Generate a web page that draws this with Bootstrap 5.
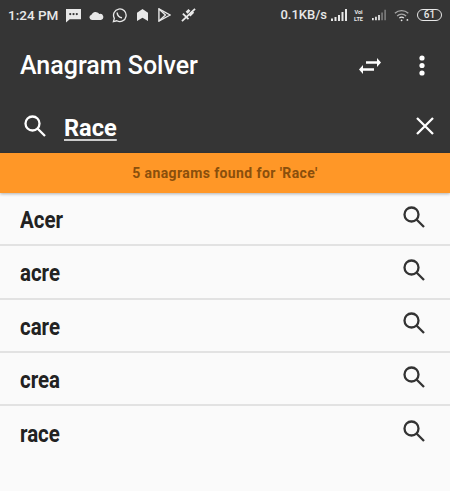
<!DOCTYPE html>
<html lang="en">
<head>
  <meta charset="UTF-8">
  <meta name="viewport" content="width=device-width, initial-scale=1.0">
  <title>Anagram Solver</title>
  <link href="https://cdn.jsdelivr.net/npm/bootstrap@5.3.0/dist/css/bootstrap.min.css" rel="stylesheet">
  <style>
    html, body { height: 100%; overflow: hidden; }
    body { font-family: Roboto, "Liberation Sans", sans-serif; background-color: #fafafa; }
    .app-dark { background-color: #353535; color: #fff; }
    .status-row { height: 30px; padding: 0 8px; font-size: 13.5px; font-weight: 500; color: #e8e8e8; }
    .status-row svg { display: block; flex: none; }
    .status-left { gap: 8px; }
    .gap-wide { margin-left: 2px; }
    .status-right { gap: 4px; }
    .net-speed { font-size: 13px; }
    .push-2 { margin-left: 2px; }
    .push-4 { margin-left: 4px; }
    .batt { width: 25px; height: 12px; border: 1.5px solid #e8e8e8; border-radius: 6px; font-size: 10px; line-height: 9px; text-align: center; }
    .tool-row { height: 71px; padding: 0 24px 0 20px; }
    .app-name { font-size: 25px; font-weight: 500; letter-spacing: 0; line-height: 1; margin: 0; }
    .tool-actions { gap: 37px; }
    .find-row { height: 52px; padding: 0 15px 0 24px; }
    .find-icon { margin-bottom: 3px; }
    .find-word { font-size: 23.6px; font-weight: 700; line-height: 1; margin-left: 18px; margin-top: 3px; text-decoration: underline; text-decoration-color: #ccc; text-decoration-thickness: 1.5px; text-underline-offset: 3px; }
    .found-bar { height: 40px; background-color: #ff9727; color: #8a4f0c; font-size: 14px; font-weight: 700; letter-spacing: .4px; box-shadow: 0 1px 3px rgba(0, 0, 0, .3); position: relative; }
    .word-list .list-group-item { height: 53.33px; padding: 0 25px 0 20px; background: transparent; border-color: #e2e2e2; border-width: 0 0 2px; }
    .word-list .list-group-item:last-child { border-bottom: 0; }
    .word-text { font-size: 23px; font-weight: 700; color: #222; margin-top: 5px; display: inline-block; transform: scaleX(.89); transform-origin: left center; }
    .word-list svg { margin-bottom: 4px; }
  </style>
</head>
<body>
  <div class="app-dark">
    <div class="status-row d-flex align-items-center justify-content-between">
      <div class="status-left d-flex align-items-center">
        <span>1:24 PM</span>
        <svg width="15" height="15" viewBox="0 0 16 16"><path fill="#e8e8e8" d="M0 1h16v11H4l-4 3.500z"/><circle cx="4.500" cy="6.500" r="1.200" fill="#353535"/><circle cx="8" cy="6.500" r="1.200" fill="#353535"/><circle cx="11.500" cy="6.500" r="1.200" fill="#353535"/></svg>
        <svg width="15" height="9" viewBox="0 0 16 10"><path fill="#e8e8e8" d="M3 10a3 3 0 0 1-.6-5.900A5 5 0 0 1 11 3.200 3.400 3.400 0 0 1 13 10z"/></svg>
        <svg width="15" height="15" viewBox="0 0 16 16" fill="none" stroke="#e8e8e8" stroke-width="1.400"><path d="M1.500 14.500l1-3.500a6.700 6.700 0 1 1 2.600 2.600z"/><path stroke-width="1.600" d="M5.500 4.800c0 3 2.500 5.500 5.200 5.700"/></svg>
        <svg class="gap-wide" width="11" height="12" viewBox="0 0 12 13"><path fill="#e8e8e8" d="M0 13V4l6-4 6 4v9L6 9.500z"/></svg>
        <svg class="gap-wide" width="13" height="14" viewBox="0 0 14 15" fill="none" stroke="#e8e8e8" stroke-width="1.500"><path d="M1 1l12 6.500L1 14z"/><path d="M1 1l7 6.500L1 14"/></svg>
        <svg class="gap-wide" width="15" height="14" viewBox="0 0 16 15" fill="none" stroke="#e8e8e8" stroke-width="2"><path d="M1 14L15 1"/><path stroke-width="3" d="M6 5l3-3M9 8l4-4"/><path d="M2 6l6 6"/></svg>
      </div>
      <div class="status-right d-flex align-items-center">
        <span class="net-speed">0.1KB/s</span>
        <svg width="16" height="12" viewBox="0 0 16 12"><path fill="#e8e8e8" d="M0 9.500h2V12H0zM3.500 8h2v4h-2zM7 6h2v6H7zM10.500 3h2v9h-2zM14 0h2v12h-2z"/></svg>
        <svg width="15" height="14" viewBox="0 0 16 14"><text x="8" y="6" text-anchor="middle" font-size="6" font-weight="700" fill="#e8e8e8">Voi</text><text x="8" y="13" text-anchor="middle" font-size="6" font-weight="700" fill="#e8e8e8">LTE</text></svg>
        <svg class="push-2" width="14" height="12" viewBox="0 0 16 12"><path fill="#e8e8e8" d="M0 9.500h2V12H0zM3.500 8h2v4h-2zM7 6h2v6H7z"/><path fill="#777" d="M10.500 3h2v9h-2zM14 0h2v12h-2z"/></svg>
        <svg class="push-4" width="17" height="14" viewBox="0 0 19 14" fill="none" stroke="#a8a8a8" stroke-width="1.500"><path d="M1 5a11 11 0 0 1 15 0"/><path d="M3.500 8a7.500 7.500 0 0 1 10 0"/><path stroke="#e8e8e8" d="M6 10.500a3.500 3.500 0 0 1 5 0"/><circle cx="8.500" cy="13" r="1" fill="#e8e8e8" stroke="none"/><circle cx="15" cy="12.500" r="1" fill="#e8e8e8" stroke="none"/></svg>
        <div class="batt push-2">61</div>
      </div>
    </div>
    <div class="tool-row d-flex align-items-center justify-content-between">
      <h1 class="app-name">Anagram Solver</h1>
      <div class="tool-actions d-flex align-items-center">
        <svg width="22" height="16" viewBox="0 0 22 16" fill="#fff"><path d="M7 3.300h11V0l4 4.500-4 4.500V5.700H7z"/><path d="M15 10.300H4V7l-4 4.500L4 16v-3.300h11z"/></svg>
        <svg width="8" height="21" viewBox="0 0 8 21" fill="#fff"><circle cx="4" cy="3" r="2.600"/><circle cx="4" cy="10.500" r="2.600"/><circle cx="4" cy="18" r="2.600"/></svg>
      </div>
    </div>
    <div class="find-row d-flex align-items-center">
      <svg class="find-icon" width="22" height="22" viewBox="0 0 22 22" fill="none" stroke="#fff" stroke-width="2.300"><circle cx="8.500" cy="8.500" r="7"/><path d="M13.500 13.500l7.500 7.500"/></svg>
      <span class="find-word">Race</span>
      <svg class="find-icon ms-auto" width="20" height="20" viewBox="0 0 20 20" fill="none" stroke="#fff" stroke-width="2.300"><path d="M2 2l16 16M18 2L2 18"/></svg>
    </div>
  </div>
  <div class="found-bar d-flex align-items-center justify-content-center">5 anagrams found for 'Race'</div>
  <div class="list-group list-group-flush word-list">
    <div class="list-group-item d-flex align-items-center justify-content-between"><span class="word-text">Acer</span><svg width="22" height="22" viewBox="0 0 22 22" fill="none" stroke="#333" stroke-width="2.300"><circle cx="8.500" cy="8.500" r="7"/><path d="M13.500 13.500l7.500 7.500"/></svg></div>
    <div class="list-group-item d-flex align-items-center justify-content-between"><span class="word-text">acre</span><svg width="22" height="22" viewBox="0 0 22 22" fill="none" stroke="#333" stroke-width="2.300"><circle cx="8.500" cy="8.500" r="7"/><path d="M13.500 13.500l7.500 7.500"/></svg></div>
    <div class="list-group-item d-flex align-items-center justify-content-between"><span class="word-text">care</span><svg width="22" height="22" viewBox="0 0 22 22" fill="none" stroke="#333" stroke-width="2.300"><circle cx="8.500" cy="8.500" r="7"/><path d="M13.500 13.500l7.500 7.500"/></svg></div>
    <div class="list-group-item d-flex align-items-center justify-content-between"><span class="word-text">crea</span><svg width="22" height="22" viewBox="0 0 22 22" fill="none" stroke="#333" stroke-width="2.300"><circle cx="8.500" cy="8.500" r="7"/><path d="M13.500 13.500l7.500 7.500"/></svg></div>
    <div class="list-group-item d-flex align-items-center justify-content-between"><span class="word-text">race</span><svg width="22" height="22" viewBox="0 0 22 22" fill="none" stroke="#333" stroke-width="2.300"><circle cx="8.500" cy="8.500" r="7"/><path d="M13.500 13.500l7.500 7.500"/></svg></div>
  </div>
  <script src="https://cdn.jsdelivr.net/npm/bootstrap@5.3.0/dist/js/bootstrap.bundle.min.js"></script>
</body>
</html>
